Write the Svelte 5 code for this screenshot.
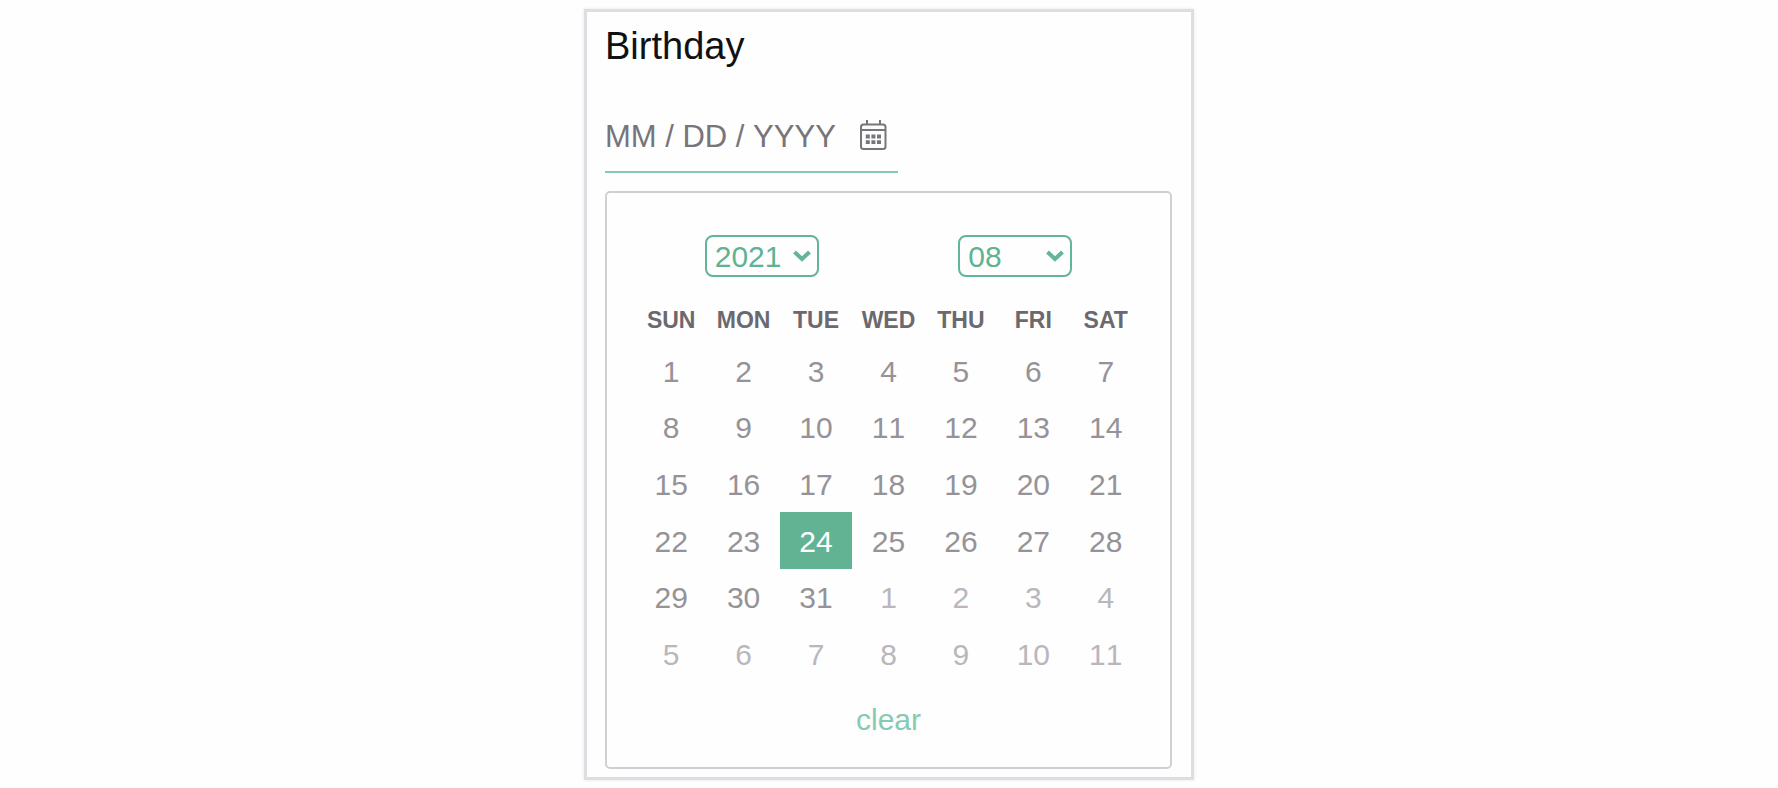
<script>
  const weekdays = ['SUN', 'MON', 'TUE', 'WED', 'THU', 'FRI', 'SAT'];
  const years = [2019, 2020, 2021, 2022];
  const months = Array.from({ length: 12 }, (_, i) => String(i + 1).padStart(2, '0'));

  let birthday = $state('');
  let year = $state(2021);
  let month = $state('08');
  let selected = $state(23);

  const weeks = $derived.by(() => {
    const m = Number(month) - 1;
    const lead = new Date(year, m, 1).getDay();
    return Array.from({ length: 6 }, (_, w) =>
      Array.from({ length: 7 }, (_, d) => {
        const index = w * 7 + d;
        const date = new Date(year, m, index - lead + 1);
        return { index, day: date.getDate(), outside: date.getMonth() !== m };
      })
    );
  });

  function clear() {
    birthday = '';
    selected = -1;
  }
</script>

<main>
  <section class="card">
    <label class="title" for="birthday">Birthday</label>
    <div class="field">
      <input id="birthday" type="text" placeholder="MM / DD / YYYY" bind:value={birthday} />
      <button class="toggle" type="button" aria-label="Open calendar">
        <svg viewBox="0 0 28 32" width="28" height="32" fill="none" stroke="#77757a">
          <rect x="2" y="5.5" width="24.5" height="24.5" rx="2.5" stroke-width="2" />
          <path d="M2 11h24.500M8 1v5M21 1v5" stroke-width="2" />
          <path d="M6.800 17.500h15.200M6.800 23.200h15.200" stroke-width="3.800" stroke-dasharray="4 1.600" />
        </svg>
      </button>
    </div>

    <div class="panel">
      <div class="pickers">
        <div class="picker">
          <select aria-label="Year" bind:value={year}>
            {#each years as y}<option value={y}>{y}</option>{/each}
          </select>
          <svg viewBox="0 0 18 12" width="18" height="12"><path d="M1.500 2l7.500 7 7.500-7" /></svg>
        </div>
        <div class="picker">
          <select aria-label="Month" bind:value={month}>
            {#each months as m}<option value={m}>{m}</option>{/each}
          </select>
          <svg viewBox="0 0 18 12" width="18" height="12"><path d="M1.500 2l7.500 7 7.500-7" /></svg>
        </div>
      </div>

      <table>
        <thead>
          <tr>{#each weekdays as name}<th scope="col">{name}</th>{/each}</tr>
        </thead>
        <tbody>
          {#each weeks as week}
            <tr>
              {#each week as cell}
                <td class:outside={cell.outside} class:selected={cell.index === selected}>
                  <button type="button" onclick={() => (selected = cell.index)}>{cell.day}</button>
                </td>
              {/each}
            </tr>
          {/each}
        </tbody>
      </table>

      <button class="clear" type="button" onclick={clear}>clear</button>
    </div>
  </section>
</main>

<style>
  :global(body) {
    background: #fefefe;
  }

  main {
    display: flex;
    justify-content: center;
    padding: 9px 16px 8px;
    font-family: "Liberation Sans", Arial, sans-serif;
  }

  button,
  input,
  select {
    margin: 0;
    padding: 0;
    border: 0;
    background: none;
    font: inherit;
    font-kerning: none;
    color: inherit;
  }

  button {
    cursor: pointer;
  }

  .card {
    box-sizing: border-box;
    width: 100%;
    max-width: 610px;
    padding: 14px 19px 8px 18px;
    border: 3px solid #dfdde1;
    box-shadow: 0 0 3px #e6e4e8;
  }

  .title {
    display: block;
    font-size: 38px;
    line-height: 40px;
    font-kerning: none;
    color: #111013;
  }

  .field {
    display: flex;
    align-items: center;
    justify-content: space-between;
    max-width: 293px;
    margin-top: 48px;
    padding-bottom: 11px;
    border-bottom: 2px solid #86c9b4;
  }

  .field input {
    flex: 1;
    min-width: 0;
    height: 46px;
    font-size: 31px;
    color: #77757a;
    outline: none;
  }

  .field input::placeholder {
    color: #77757a;
    opacity: 1;
  }

  .toggle {
    display: flex;
    padding: 0 11px 4px 0;
  }

  .panel {
    display: flex;
    flex-direction: column;
    margin-top: 18px;
    padding: 42px 28px 29px;
    border: 2px solid #d1cfd3;
    border-radius: 5px;
    font-size: 30px;
  }

  .pickers {
    display: grid;
    grid-template-columns: 1fr 1fr;
    justify-items: center;
  }

  .picker {
    display: grid;
    align-items: center;
    color: #5eb393;
  }

  .picker select,
  .picker svg {
    grid-area: 1 / 1;
  }

  .picker select {
    appearance: none;
    width: 114px;
    height: 42px;
    padding: 0 8px;
    border: 2px solid #62b596;
    border-radius: 8px;
  }

  .picker svg {
    justify-self: end;
    margin-right: 8px;
    pointer-events: none;
    fill: none;
    stroke: #62b596;
    stroke-width: 4;
  }

  table {
    width: 100%;
    height: 386px;
    margin-top: 19px;
    border-collapse: collapse;
    table-layout: fixed;
  }

  th {
    height: 44px;
    padding: 2px 0 0;
    font-size: 23px;
    color: #6b696d;
  }

  td {
    padding: 0;
    text-align: center;
    color: #959397;
  }

  td button {
    width: 100%;
    height: 56px;
    padding-top: 3px;
  }

  .outside {
    color: #b9b7bb;
  }

  .selected {
    background: #62b394;
    color: #fff;
  }

  .clear {
    align-self: center;
    margin-top: 20px;
    line-height: 36px;
    color: #86cab2;
  }
</style>
